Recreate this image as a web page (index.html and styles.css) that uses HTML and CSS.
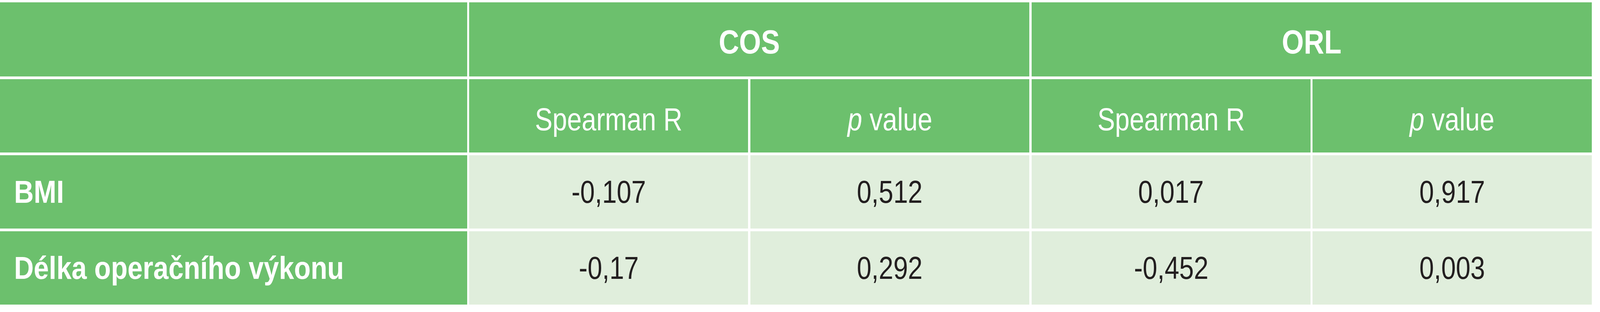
FILE: index.html
```html
<!DOCTYPE html>
<html lang="cs">
<head>
<meta charset="utf-8">
<title>Tabulka</title>
<link rel="stylesheet" href="styles.css">
</head>
<body>
<div class="table">
  <div class="cell head"></div>
  <div class="cell head group span2"><span class="txt">COS</span></div>
  <div class="cell head group span2"><span class="txt">ORL</span></div>

  <div class="cell head"></div>
  <div class="cell head sub"><span class="txt">Spearman R</span></div>
  <div class="cell head sub"><span class="txt"><i>p</i> value</span></div>
  <div class="cell head sub"><span class="txt">Spearman R</span></div>
  <div class="cell head sub"><span class="txt"><i>p</i> value</span></div>

  <div class="cell head label"><span class="txt">BMI</span></div>
  <div class="cell data"><span class="txt">-0,107</span></div>
  <div class="cell data"><span class="txt">0,512</span></div>
  <div class="cell data"><span class="txt">0,017</span></div>
  <div class="cell data"><span class="txt">0,917</span></div>

  <div class="cell head label"><span class="txt">Délka operačního výkonu</span></div>
  <div class="cell data"><span class="txt">-0,17</span></div>
  <div class="cell data"><span class="txt">0,292</span></div>
  <div class="cell data"><span class="txt">-0,452</span></div>
  <div class="cell data"><span class="txt">0,003</span></div>
</div>
</body>
</html>
```
FILE: styles.css
```css
:root {
  --x: calc(100vw / 5190);
  --y: calc(100vh / 800);
}

html, body {
  margin: 0;
  padding: 0;
  background: #ffffff;
  overflow: hidden;
}

body {
  font-family: "Liberation Sans", Arial, sans-serif;
  padding-top: calc(6 * var(--y));
}

.table {
  display: grid;
  grid-template-columns: calc(1515 * var(--x)) repeat(4, calc(905 * var(--x)));
  grid-template-rows: calc(190 * var(--y)) calc(188 * var(--y)) calc(188 * var(--y)) calc(188 * var(--y));
  row-gap: calc(7 * var(--y));
  column-gap: calc(7 * var(--x));
  width: max-content;
}

.cell {
  display: flex;
  align-items: center;
  justify-content: center;
  font-size: calc(82 * var(--y));
  line-height: 1;
  white-space: nowrap;
}

/* the source face is a narrow humanist sans: condense the glyphs */
.txt {
  display: inline-block;
  transform: scaleX(0.82);
}

.head {
  background: #6cc06d;
  color: #ffffff;
}

.span2 {
  grid-column: span 2;
}

.group {
  font-weight: 700;
  font-size: calc(86 * var(--y));
  padding-top: calc(12 * var(--y));
}

.group .txt {
  transform: scaleX(0.84);
}

.sub {
  font-weight: 400;
  padding-top: calc(18 * var(--y));
}

.label {
  justify-content: flex-start;
  padding-left: calc(46 * var(--x));
  font-weight: 700;
}

.label .txt {
  transform: scaleX(0.85);
  transform-origin: left center;
}

.data {
  background: #e0eedc;
  color: #231f20;
}
```
